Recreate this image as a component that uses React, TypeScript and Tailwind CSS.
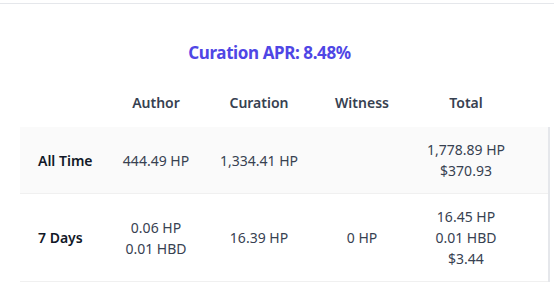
import React from "react";

const rows = [
  {
    label: "All Time",
    author: ["444.49 HP"],
    curation: ["1,334.41 HP"],
    witness: [] as string[],
    total: ["1,778.89 HP", "$370.93"],
    bg: "bg-[#fafafa]",
  },
  {
    label: "7 Days",
    author: ["0.06 HP", "0.01 HBD"],
    curation: ["16.39 HP"],
    witness: ["0 HP"],
    total: ["16.45 HP", "0.01 HBD", "$3.44"],
    bg: "bg-white",
  },
];

function Cell({ lines }: { lines: string[] }) {
  return (
    <div className="flex flex-col items-center justify-center text-center text-[14px] leading-[21px] text-[#374151]">
      {lines.map((l) => (
        <div key={l}>{l}</div>
      ))}
    </div>
  );
}

export default function App() {
  return (
    <div
      className="mt-[3px] border-t border-[#e5e7eb] bg-white pt-[35px]"
      style={{ fontFamily: '"Noto Sans", "Open Sans", sans-serif' }}
    >
      <h2 className="pr-[15px] text-center text-[17px] font-bold leading-[28px] tracking-[-0.4px] text-[#4f46e5]">
        Curation APR: 8.48%
      </h2>
      <div className="ml-5 mt-[11px] w-[530px]">
        <div className="grid grid-cols-[84px_104px_102px_104px_104px_1fr] py-[14px] text-[14px] font-semibold leading-[21px] text-[#374151]">
          <div />
          <div className="text-center">Author</div>
          <div className="text-center">Curation</div>
          <div className="text-center">Witness</div>
          <div className="text-center">Total</div>
          <div />
        </div>
        <div className="border-r-2 border-[#e5e7eb]">
          {rows.map((r) => (
            <div
              key={r.label}
              className={`grid grid-cols-[84px_104px_102px_104px_104px_1fr] border-b border-[#f0f0f0] py-3 ${r.bg}`}
            >
              <div className="flex items-center pl-[18px] text-[14px] font-semibold leading-[21px] text-[#111827]">
                {r.label}
              </div>
              <Cell lines={r.author} />
              <Cell lines={r.curation} />
              <Cell lines={r.witness} />
              <Cell lines={r.total} />
              <div />
            </div>
          ))}
        </div>
      </div>
    </div>
  );
}
